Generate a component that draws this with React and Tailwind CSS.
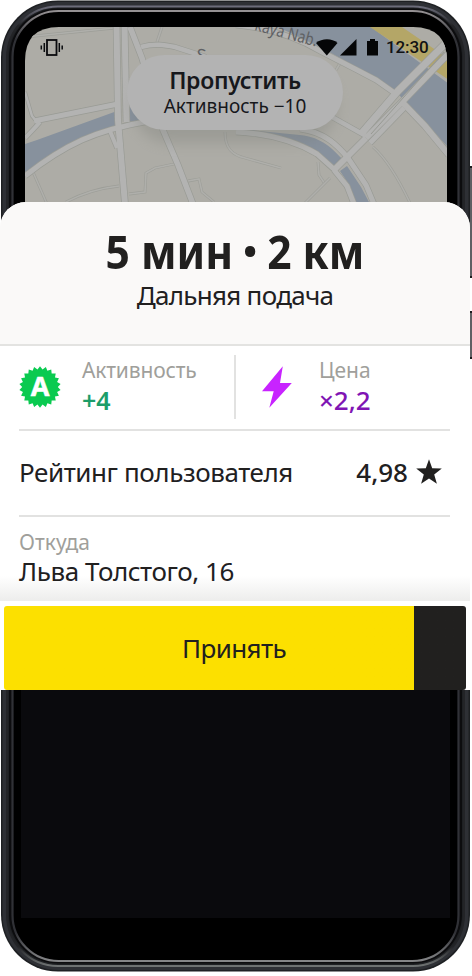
import React from 'react';

const SEAL_TEETH = 22;

const sealPoints = Array.from({ length: SEAL_TEETH * 2 }, (_, i) => {
  const r = i % 2 === 0 ? 20.8 : 17.8;
  const a = (Math.PI * i) / SEAL_TEETH - Math.PI / 2;
  return `${(21 + r * Math.cos(a)).toFixed(2)},${(21 + r * Math.sin(a)).toFixed(2)}`;
}).join(' ');

// roads are drawn twice: a darker casing, then a lighter fill on top
const roads = [
  { d: 'M25 176 C45 160 60 150 82 140 C100 132 120 126 150 121', w: 5 },
  { d: 'M25 92 L32 116 L37 122', w: 2.5 },
  { d: 'M25 138 C31 132 34 129 40 122', w: 4 },
  { d: 'M34 121 L118 104', w: 5 },
  { d: 'M130 27 L142 58 L163 130 L178 165 L193 204', w: 5.5 },
  { d: 'M141 47 C155 43 165 45 175 47 L206 57', w: 4.5 },
  { d: 'M110 131 L117 148', w: 4 },
  { d: 'M116.5 24 L118 120 L125 204', w: 6 },
  { d: 'M124.5 24 L126.5 122', w: 6 },
  { d: 'M236 25 C270 28 298 38 322 52 L357 70 L376 80 L396 94', w: 5 },
  { d: 'M403 103 L425 126 L449 155', w: 6 },
  { d: 'M332 117 L366 136', w: 4.5 },
  { d: 'M236 132 C275 134 300 144 317 154 L336 171', w: 5 },
  { d: 'M300 129 C325 132 338 146 348 158 L366 185 L374 204', w: 5 },
  { d: 'M334 170 L347 186 L354 204', w: 5 },
  { d: 'M333 171 L366 138', w: 6 },
  { d: 'M404 108 L370 143', w: 5 },
  { d: 'M449 40 L398 91 L361 134', w: 7 },
  { d: 'M452 50 L404 100 L366 138', w: 6 },
];

const lanes = [
  'M25 37 L114 28',
  'M162 27 L157 42',
  'M33 172 L47 204',
  'M66 202 C85 192 100 188 119 186',
  'M129 194 L145 192 L146 173 L155 168 L174 164',
  'M188 181 L199 179 L202 192 L214 202',
  'M225 132 C225 148 232 155 245 158 L281 168',
  'M318 162 L319 175 L325 184',
  'M330 178 L305 203',
  'M373 147 C388 160 400 182 410 203',
  'M336 70 L342 60',
];

const MapDrawing = () => (
  <g clipPath="url(#screen)">
    <rect x="25" y="27" width="422" height="180" fill="#adaca6" />
    <path d="M25 144 L37 140 L117 111 L117 126 L85 137 L60 149 L37 166 L25 172 Z" fill="#87919d" />
    <path d="M127 107 L150 107 L150 120 L127 122 Z" fill="#87919d" />
    <path d="M278 27 L371 27 L449 84 L449 148 L400 96 L376 78 L322 48 Z" fill="#87919d" />
    <path d="M370 27 L402 27 L449 59 L449 80 Z" fill="#b4a667" />
    <path d="M250 130 L300 135 C322 137 334 150 343 160 L336 168 C322 152 300 142 250 131 Z" fill="#87919d" />
    <path d="M340 171 L347 166 L361 187 L370 204 L356 204 L350 186 Z" fill="#87919d" />
    {lanes.map((d) => (
      <g key={d} fill="none">
        <path d={d} stroke="#9d9e98" strokeWidth="2.8" />
        <path d={d} stroke="#afafab" strokeWidth="1.6" />
      </g>
    ))}
    {roads.map(({ d, w }) => (
      <path key={d} d={d} fill="none" stroke="#999b95" strokeWidth={w + 1.4} />
    ))}
    {roads.map(({ d, w }) => (
      <path key={d} d={d} fill="none" stroke="#b3b3b2" strokeWidth={w} />
    ))}
    <path d="M444 52 L371 134" stroke="#979993" strokeWidth="1" />
    <g fill="#5f6164" fontFamily="Noto Sans, sans-serif" fontSize="17">
      <text transform="translate(254 30) rotate(15)" textLength="64" lengthAdjust="spacingAndGlyphs">
        kaya Nab.
      </text>
      <text transform="translate(195 60) rotate(12)">S</text>
    </g>
  </g>
);

const Phone = () => (
  <svg className="absolute inset-0" width="472" height="976" viewBox="0 0 472 976">
    <defs>
      <linearGradient id="rim" x1="0" y1="0" x2="0" y2="1">
        <stop offset="0" stopColor="#6c6c7a" />
        <stop offset="0.02" stopColor="#232427" />
        <stop offset="0.98" stopColor="#232427" />
        <stop offset="1" stopColor="#6f7373" />
      </linearGradient>
      <linearGradient id="inner" x1="0" y1="0" x2="0" y2="1">
        <stop offset="0" stopColor="#969294" />
        <stop offset="0.03" stopColor="#303136" />
        <stop offset="0.97" stopColor="#303136" />
        <stop offset="1" stopColor="#858688" />
      </linearGradient>
      <clipPath id="screen">
        <path d="M25 207 V61 Q25 27 59 27 H413 Q447 27 447 61 V207 Z" />
      </clipPath>
      <filter id="soft" x="-20%" y="-30%" width="140%" height="190%">
        <feGaussianBlur stdDeviation="7" />
      </filter>
    </defs>
    <rect x="469" y="166" width="4" height="112" fill="#1b1b1d" />
    <rect x="470" y="168" width="3" height="108" fill="#606064" />
    <rect x="469" y="311" width="4" height="48" fill="#1b1b1d" />
    <rect x="470" y="313" width="3" height="44" fill="#606064" />
    <rect x="1" y="0.5" width="469" height="971" rx="57" fill="#1e2023" />
    <rect x="4.5" y="4" width="462" height="964" rx="54" fill="none" stroke="#2e3035" strokeWidth="4" />
    <rect x="7" y="6.5" width="457" height="959.5" rx="51" fill="none" stroke="url(#rim)" strokeWidth="2" />
    <rect x="9" y="8.5" width="453" height="955" rx="49" fill="#0c0c0e" />
    <rect x="12.5" y="11" width="446" height="950" rx="46" fill="#000" stroke="url(#inner)" strokeWidth="2.2" />
    <rect x="21" y="690" width="429" height="228" fill="#0a0a0d" />
    <MapDrawing />
    <rect x="133" y="68" width="204" height="75" rx="37" fill="#777973" opacity="0.32" filter="url(#soft)" />
  </svg>
);

const StatusBar = () => (
  <div className="flex h-[18px] items-center justify-between pl-[40px] pr-[43px]">
    <svg width="24" height="18" viewBox="0 0 24 18" fill="none" stroke="#0a0b0e" strokeWidth="1.5">
      <rect x="7" y="2" width="9.5" height="15" strokeWidth="1.8" />
      <path d="M1.3 7.5 V11.5 M4.3 5 V14 M19.3 5 V14 M22.2 7.5 V11.5" />
    </svg>
    <div className="flex items-center">
      <svg width="62" height="20" viewBox="0 0 62 20" fill="#050607">
        <path d="M0 6 C6 1 16 1 21.5 6 L10.8 18.5 Z" />
        <path d="M24 18.5 L40.5 2 V18.5 Z" />
        <path d="M51 4 H54 V2 H59 V4 H62 V18.5 H51 Z" />
      </svg>
      <span className="ml-[8px] w-[43px] whitespace-nowrap font-['Roboto',sans-serif] text-[17px] font-medium leading-[18px] tracking-[-0.1px] text-[#111214]">
        12:30
      </span>
    </div>
  </div>
);

const SkipButton = () => (
  <button className="ml-[127px] block h-[75px] w-[216px] rounded-full bg-[#b3b3b3] pb-px text-center text-[#17181c]">
    <span className="block text-[23px] font-semibold leading-7 tracking-[-0.3px]">Пропустить</span>
    <span className="block text-[19px] leading-6">Активность −10</span>
  </button>
);

const Seal = () => (
  <svg width="42" height="42" viewBox="0 0 42 42">
    <polygon points={sealPoints} fill="#0aca50" />
    <text
      x="21"
      y="29.5"
      textAnchor="middle"
      fill="#fff"
      stroke="#fff"
      strokeWidth="0.5"
      fontFamily="Noto Sans, sans-serif"
      fontSize="27"
      fontWeight="700"
    >
      A
    </text>
  </svg>
);

const Bolt = () => (
  <svg width="30" height="42" viewBox="262 366 30 42" fill="#c823ff">
    <path d="M282.8 366.3 L280 383 H291.8 L269.3 407.8 L273.7 391.2 H262 Z" />
  </svg>
);

const Star = () => (
  <svg width="26" height="26" viewBox="0 0 26 26" fill="#21201f">
    <path d="M13 0.3 L16.2 9.3 L25.8 9.6 L18.2 15.5 L20.9 24.8 L13 19.4 L5.1 24.8 L7.8 15.5 L0.2 9.6 L9.8 9.3 Z" />
  </svg>
);

const OfferCard = () => (
  <div className="w-[470px] overflow-hidden rounded-t-[26px] bg-white text-[#21201f]">
    <div className="h-[144px] border-b-2 border-[#e3e3e1] bg-[#faf9f8] pt-[21px] text-center">
      <h1 className="scale-x-[0.905] text-[47px] font-bold leading-[56px]">
        5 мин <span className="inline-block origin-[50%_57%] scale-[1.4]">·</span> 2 км
      </h1>
      <p className="text-[26px] leading-8 tracking-[-0.7px]">Дальняя подача</p>
    </div>

    <div className="mx-[19px] w-[431px]">
      <div className="flex h-[85px] border-b-2 border-[#e2e2e1]">
        <div className="mt-[9px] flex h-[64px] w-[217px] border-r-2 border-[#e2e2e1]">
          <div className="mt-[11px]">
            <Seal />
          </div>
          <div className="ml-[21px] mt-px">
            <p className="text-[21px] leading-7 tracking-[-0.15px] text-[#a09f9b]">Активность</p>
            <p className="text-[25px] font-semibold leading-8 text-[#1c9d68]">+4</p>
          </div>
        </div>
        <div className="mt-5 ml-[26px]">
          <Bolt />
        </div>
        <div className="ml-[27px] mt-2.5">
          <p className="text-[21px] leading-7 text-[#a09f9b]">Цена</p>
          <p className="text-[26px] font-medium leading-8 text-[#8015b4]">×2,2</p>
        </div>
      </div>

      <div className="flex h-[86px] items-center border-b-2 border-[#e2e2e1] pb-[2px] pr-[8px]">
        <p className="text-[26px] leading-8 tracking-[-0.42px]">Рейтинг пользователя</p>
        <p className="ml-auto mr-[8px] text-[26px] font-medium leading-8">4,98</p>
        <Star />
      </div>
    </div>

    <div className="h-[84px] bg-linear-to-b from-white from-70% to-[#ededec] px-[19px] pt-[11px]">
      <p className="text-[21px] leading-7 text-[#a09f9b]">Откуда</p>
      <p className="-mt-px text-[26px] leading-8 tracking-[-0.45px]">Льва Толстого, 16</p>
    </div>

    <div className="px-1 pt-[5px]">
      <button className="flex h-[84px] w-[462px] items-center justify-center rounded-[3px] bg-linear-to-r from-[#fce000] from-[410px] to-[#21201f] to-[410px] pr-[2px] text-[26px] leading-8 tracking-[-0.6px]">
        Принять
      </button>
    </div>
  </div>
);

export default function App() {
  return (
    <div className="relative h-[976px] w-[472px] overflow-hidden bg-white font-['Noto_Sans',sans-serif]">
      <Phone />
      <div className="relative pt-[38px]">
        <div className="h-[164px]">
          <StatusBar />
          <div className="-mt-px">
            <SkipButton />
          </div>
        </div>
        <OfferCard />
      </div>
    </div>
  );
}
